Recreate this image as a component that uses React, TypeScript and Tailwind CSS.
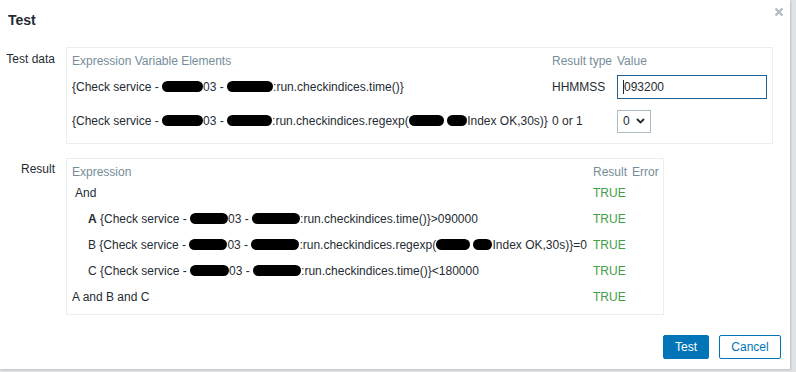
import React from "react";

function Blob({ className }: { className: string }) {
  return (
    <span
      className={
        "inline-block h-[11px] rounded-full bg-black align-[-1px] " + className
      }
    />
  );
}

export default function App() {
  return (
    <div
      className="w-[796px] h-[372px] bg-[#dfe3e6] text-[12px] text-[#1f2c33]"
      style={{ fontFamily: '"Liberation Sans", Arial, sans-serif' }}
    >
      <div className="relative w-[790px] h-[369px] bg-white flex flex-col shadow-[1px_1px_2px_rgba(0,0,0,0.15)]">
        {/* Header */}
        <div className="pt-[11px] pl-[8px] h-[29px] text-[14px] leading-[18px] font-bold text-[#1f2c33]">
          Test
        </div>
        <button className="absolute right-[6px] top-[7px] w-[10px] h-[10px] flex items-center justify-center">
          <svg width="10" height="10" viewBox="0 0 10 10">
            <path
              d="M1.5 1.5 L8.5 8.5 M8.5 1.5 L1.5 8.5"
              stroke="#b3bcc1"
              strokeWidth="2.4"
              strokeLinecap="butt"
            />
          </svg>
        </button>

        {/* Form */}
        <div className="mt-[18px] grid grid-cols-[55px_auto] gap-x-[11px] justify-start">
          {/* Test data */}
          <div className="pt-[4px] text-right leading-[16px] whitespace-nowrap">
            Test data
          </div>
          <div className="border border-[#ebeef0] pl-[5px] pr-[4px] pt-[5px] pb-[10px] w-[707px]">
            <div className="grid grid-cols-[480px_65px_150px] leading-[16px] text-[#768d99]">
              <div>Expression Variable Elements</div>
              <div>Result type</div>
              <div>Value</div>
            </div>
            <div className="mt-[6px] grid grid-cols-[480px_65px_150px] items-center leading-[16px] h-[24px]">
              <div className="whitespace-nowrap">
                {"{Check service - "}
                <Blob className="w-[41px]" />
                {"03 - "}
                <Blob className="w-[46px]" />
                {":run.checkindices.time()}"}
              </div>
              <div>HHMMSS</div>
              <div className="h-[24px] border border-[#1f5f92] flex items-center pl-[5px]">
                <span className="inline-block w-[1px] h-[14px] bg-[#1f2c33]" />
                <span>093200</span>
              </div>
            </div>
            <div className="mt-[10px] grid grid-cols-[480px_65px_150px] items-center leading-[16px] h-[24px]">
              <div className="whitespace-nowrap">
                {"{Check service - "}
                <Blob className="w-[41px]" />
                {"03 - "}
                <Blob className="w-[45px]" />
                {":run.checkindices.regexp("}
                <Blob className="w-[35px]" />{" "}
                <Blob className="w-[20px]" />
                {"Index OK,30s)}"}
              </div>
              <div>0 or 1</div>
              <div>
                <div className="w-[34px] h-[23px] border border-[#acbbc2] flex items-center pl-[5px] gap-[6px]">
                  <span>0</span>
                  <svg width="9" height="6" viewBox="0 0 9 6">
                    <path
                      d="M1 1 L4.5 4.5 L8 1"
                      fill="none"
                      stroke="#1f2c33"
                      strokeWidth="1.8"
                    />
                  </svg>
                </div>
              </div>
            </div>
          </div>

          {/* Result */}
          <div className="mt-[14px] pt-[3px] text-right leading-[16px]">
            Result
          </div>
          <div className="mt-[14px] border border-[#ebeef0] pl-[5px] pr-[3px] pt-[5px] pb-[4px] w-[598px]">
            <div className="grid grid-cols-[521px_39px_28px] leading-[16px] text-[#768d99]">
              <div>Expression</div>
              <div>Result</div>
              <div>Error</div>
            </div>
            <div className="grid grid-cols-[521px_39px_28px] auto-rows-[26px] items-center leading-[16px] whitespace-nowrap">
              <div className="pl-[3px]">And</div>
              <div className="text-[#429e47]">TRUE</div>
              <div />

              <div className="pl-[16px]">
                <span className="font-bold">A</span>
                {" {Check service - "}
                <Blob className="w-[38px]" />
                {"03 - "}
                <Blob className="w-[48px]" />
                {":run.checkindices.time()}>090000"}
              </div>
              <div className="text-[#429e47]">TRUE</div>
              <div />

              <div className="pl-[16px]">
                <span>B</span>
                {" {Check service - "}
                <Blob className="w-[38px]" />
                {"03 - "}
                <Blob className="w-[48px]" />
                {":run.checkindices.regexp("}
                <Blob className="w-[34px]" />{" "}
                <Blob className="w-[19px]" />
                {"Index OK,30s)}=0"}
              </div>
              <div className="text-[#429e47]">TRUE</div>
              <div />

              <div className="pl-[16px]">
                <span>C</span>
                {" {Check service - "}
                <Blob className="w-[39px]" />
                {"03 - "}
                <Blob className="w-[48px]" />
                {":run.checkindices.time()}<180000"}
              </div>
              <div className="text-[#429e47]">TRUE</div>
              <div />

              <div>A and B and C</div>
              <div className="text-[#429e47]">TRUE</div>
              <div />
            </div>
          </div>
        </div>

        {/* Footer */}
        <div className="mt-auto flex justify-end gap-[10px] pr-[9px] pb-[10px]">
          <button className="w-[46px] h-[24px] bg-[#0275b8] border border-[#0275b8] rounded-[2px] text-white text-[12px]">
            Test
          </button>
          <button className="w-[62px] h-[24px] bg-white border border-[#0275b8] rounded-[2px] text-[#0275b8] text-[12px]">
            Cancel
          </button>
        </div>
      </div>
    </div>
  );
}
